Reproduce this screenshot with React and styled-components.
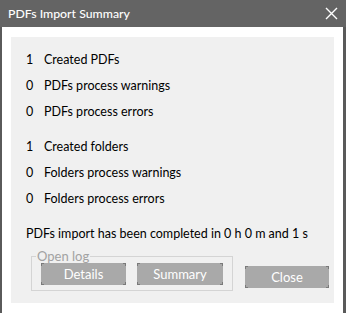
import React from "react";
import styled, { createGlobalStyle } from "styled-components";

const Global = createGlobalStyle`
  html, body { margin: 0; padding: 0; background: #ffffff; }
  body { font-family: Lato, "Noto Sans", sans-serif; }
`;

const Window = styled.div`
  width: 346px;
  height: 313px;
  box-sizing: border-box;
  display: flex;
  flex-direction: column;
  background: #ffffff;
  border-left: 2px solid #5a5a5a;
  border-right: 3px solid #5a5a5a;
`;

const TitleBar = styled.div`
  height: 27px;
  flex: none;
  display: flex;
  align-items: center;
  justify-content: space-between;
  background: #646464;
  margin: 0 -3px 0 -2px;
  padding: 0 8px 0 8px;
  color: #ffffff;
  font-size: 12.3px;
  font-weight: 500;
`;

const CloseX = styled.svg`
  width: 13px;
  height: 13px;
`;

const Body = styled.div`
  flex: 1;
  padding: 10px 9px 10px 9px;
  display: flex;
`;

const Panel = styled.div`
  flex: 1;
  background: #f0f0f0;
  padding: 9px 0 0 15px;
  display: flex;
  flex-direction: column;
  font-size: 12.5px;
  color: #000;
`;

const Group = styled.div`
  display: flex;
  flex-direction: column;
  margin-bottom: ${(p) => p.$gap}px;
`;

const Row = styled.div`
  display: flex;
  height: 26px;
  align-items: center;
`;

const Num = styled.span`
  width: 18px;
`;

const Message = styled.div`
  height: 20px;
  display: flex;
  align-items: center;
  margin-top: 3px;
`;

const Footer = styled.div`
  display: flex;
  align-items: flex-end;
  margin-top: 6px;
  padding-left: 4px;
`;

const Fieldset = styled.fieldset`
  margin: 0 0 0 1px;
  padding: 0 9px 5px 9px;
  border: 1px solid #d4d4d4;
  display: flex;
  gap: 11px;
  width: 199px;
  box-sizing: border-box;
`;

const Legend = styled.legend`
  padding: 0 1px;
  margin-left: -5px;
  color: #a2a2a2;
  font-size: 13px;
  line-height: 14px;
`;

const corner = "#7a7a7a";

const Button = styled.div`
  width: ${(p) => p.$w}px;
  height: 22px;
  box-sizing: border-box;
  display: flex;
  align-items: center;
  justify-content: center;
  color: #ffffff;
  font-size: 13px;
  margin-bottom: ${(p) => p.$mb || 0}px;
  margin-left: ${(p) => p.$ml || 0}px;
  background:
    linear-gradient(${corner}, ${corner}) left top / 3px 1px no-repeat,
    linear-gradient(${corner}, ${corner}) left top / 1px 3px no-repeat,
    linear-gradient(${corner}, ${corner}) right top / 3px 1px no-repeat,
    linear-gradient(${corner}, ${corner}) right top / 1px 3px no-repeat,
    linear-gradient(${corner}, ${corner}) left bottom / 3px 1px no-repeat,
    linear-gradient(${corner}, ${corner}) left bottom / 1px 3px no-repeat,
    linear-gradient(${corner}, ${corner}) right bottom / 3px 1px no-repeat,
    linear-gradient(${corner}, ${corner}) right bottom / 1px 3px no-repeat,
    #a9a9a9;
`;

const rows1 = [
  ["1", "Created PDFs"],
  ["0", "PDFs process warnings"],
  ["0", "PDFs process errors"],
];
const rows2 = [
  ["1", "Created folders"],
  ["0", "Folders process warnings"],
  ["0", "Folders process errors"],
];

export default function App() {
  return (
    <>
      <Global />
      <Window>
        <TitleBar>
          <span>PDFs Import Summary</span>
          <CloseX viewBox="0 0 13 13">
            <path d="M1 1 L12 12 M12 1 L1 12" stroke="#fff" strokeWidth="1.4" />
          </CloseX>
        </TitleBar>
        <Body>
          <Panel>
            <Group $gap={9}>
              {rows1.map(([n, t]) => (
                <Row key={t}>
                  <Num>{n}</Num>
                  <span>{t}</span>
                </Row>
              ))}
            </Group>
            <Group $gap={9}>
              {rows2.map(([n, t]) => (
                <Row key={t}>
                  <Num>{n}</Num>
                  <span>{t}</span>
                </Row>
              ))}
            </Group>
            <Message>PDFs import has been completed in 0 h 0 m and 1 s</Message>
            <Footer>
              <Fieldset>
                <Legend>Open log</Legend>
                <Button $w={85}>Details</Button>
                <Button $w={86}>Summary</Button>
              </Fieldset>
              <Button $w={84} $mb={3} $ml={12}>Close</Button>
            </Footer>
          </Panel>
        </Body>
      </Window>
    </>
  );
}
